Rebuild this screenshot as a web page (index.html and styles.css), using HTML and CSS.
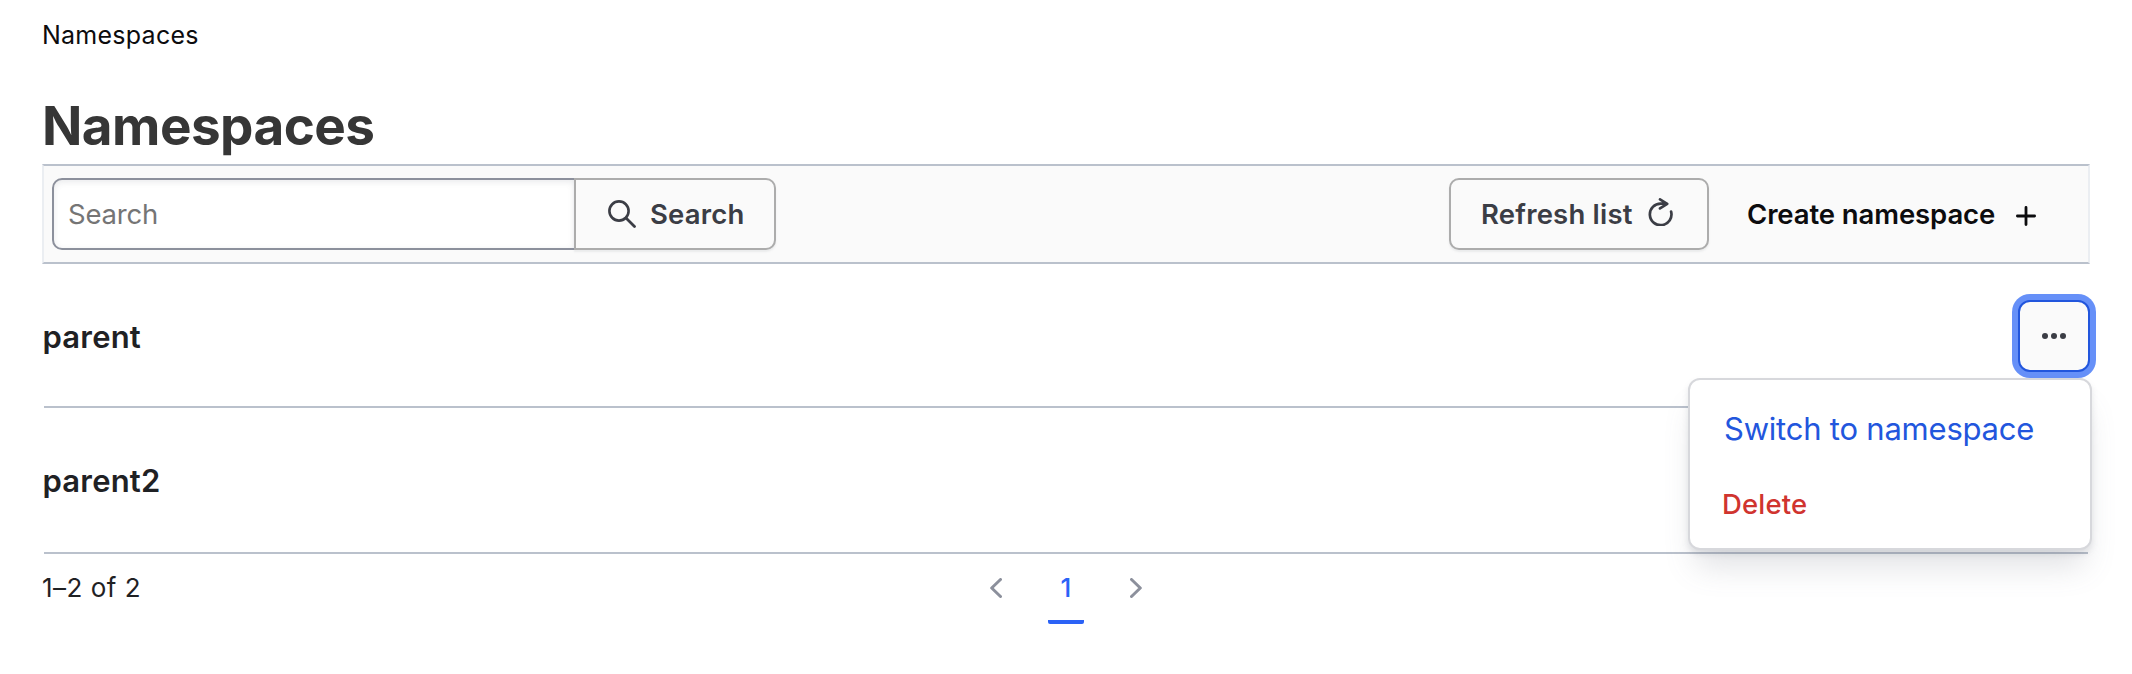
FILE: index.html
```html
<!DOCTYPE html>
<html lang="en">
<head>
<meta charset="utf-8">
<title>Namespaces</title>
<link rel="stylesheet" href="styles.css">
</head>
<body>
<nav class="breadcrumb"><span>Namespaces</span></nav>
<h1 class="title"><span>Namespaces</span></h1>
<div class="toolbar">
  <form class="search">
    <input class="search-input" type="text" placeholder="Search">
    <button class="btn search-btn" type="button">
      <svg width="28" height="28" viewBox="0 0 28 28" fill="none" stroke="currentColor"><circle cx="11" cy="11" r="9.6" stroke-width="2.6"/><path d="M18 18l8.5 8.5" stroke-width="2.8" stroke-linecap="round"/></svg>
      <span>Search</span>
    </button>
  </form>
  <div class="actions">
    <button class="btn refresh-btn" type="button">
      <span>Refresh list</span>
      <svg width="26" height="28" viewBox="0 0 26 28" fill="none" stroke="currentColor" stroke-width="2.7" stroke-linecap="round" stroke-linejoin="round"><path d="M23.1 13.6A10.8 10.8 0 1 1 13 5.6H18.8M12 1.4l7.2 4.4L12 10.4"/></svg>
    </button>
    <a class="create"><span>Create namespace</span>
      <svg width="20" height="20" viewBox="0 0 20 20" fill="none" stroke="currentColor" stroke-width="2.8" stroke-linecap="round"><path d="M10 1.4v17.2M1.4 10h17.2"/></svg>
    </a>
  </div>
</div>
<ul class="list">
  <li class="row">
    <span class="name">parent</span>
    <div class="menu-wrap">
      <button class="more" type="button" aria-label="More"><svg width="24" height="6" viewBox="0 0 24 6" fill="currentColor"><circle cx="3" cy="3" r="3"/><circle cx="12" cy="3" r="3"/><circle cx="21" cy="3" r="3"/></svg></button>
      <div class="menu">
        <a class="switch"><span>Switch to namespace</span></a>
        <a class="delete"><span>Delete</span></a>
      </div>
    </div>
  </li>
  <li class="row second"><span class="name">parent2</span></li>
</ul>
<footer class="pager">
  <span class="count">1–2 of 2</span>
  <div class="pages">
    <svg width="12" height="20" viewBox="0 0 12 20" fill="none" stroke="currentColor" stroke-width="3" stroke-linecap="round" stroke-linejoin="round"><path d="M10.5 1.5L1.7 10l8.8 8.5"/></svg>
    <span class="page">1</span>
    <svg width="12" height="20" viewBox="0 0 12 20" fill="none" stroke="currentColor" stroke-width="3" stroke-linecap="round" stroke-linejoin="round"><path d="M1.5 1.5l8.8 8.5-8.8 8.5"/></svg>
  </div>
</footer>
</body>
</html>
```
FILE: styles.css
```css
* { box-sizing: border-box; }
body { margin: 0; padding: 0 42px; background: #fff; font-family: Inter, "Liberation Sans", sans-serif; color: #1f2124; }
button, input { font: inherit; margin: 0; }
svg { display: block; flex: none; }
.breadcrumb { height: 70px; padding-top: 19px; font-size: 25px; line-height: 32px; letter-spacing: .25px; color: #0c0c0e; }
.title { margin: 0; height: 94px; padding-top: 24px; font-size: 53px; line-height: 64px; font-weight: 700; letter-spacing: -.55px; color: #363636; }
.toolbar { height: 100px; display: flex; justify-content: space-between; align-items: center; padding: 0 0 0 8px; border: 2px solid #bac1cc; border-left-color: #ebeef2; border-right-color: #ebeef2; background: #fafafa; }
.search { display: flex; }
.search-input { width: 524px; height: 72px; padding: 0 14px; border: 2px solid #8c909c; border-radius: 10px 0 0 10px; background: #fff; box-shadow: inset 0 2px 6px rgba(101,106,118,.14); font-size: 27.5px; letter-spacing: -.2px; outline: 0; }
.search-input::placeholder { color: #757575; opacity: 1; }
.btn { height: 72px; display: flex; align-items: center; border: 2px solid #acacac; background: #fafafa; color: #3b3d45; font-size: 27.5px; font-weight: 600; letter-spacing: .2px; box-shadow: 0 2px 2px rgba(101,106,118,.1); white-space: nowrap; }
.search-btn { width: 202px; margin-left: -2px; padding: 0 0 0 32px; gap: 14px; border-radius: 0 10px 10px 0; }
.actions { display: flex; align-items: center; }
.refresh-btn { width: 260px; padding: 0 0 0 30px; gap: 15px; border-radius: 10px; }
.refresh-btn svg { margin-top: -4px; }
.create { width: 379px; display: flex; align-items: center; padding-left: 38px; gap: 21px; font-size: 27.5px; font-weight: 600; letter-spacing: -.1px; color: #0c0c0e; white-space: nowrap; }
.create svg { margin-top: 4px; }
.list { margin: 0; padding: 0; list-style: none; }
.row { height: 144px; margin: 0 2px; display: flex; justify-content: space-between; align-items: center; border-bottom: 2px solid #bac1cc; font-size: 31px; font-weight: 600; }
.row:first-child { padding-top: 2px; }
.second { height: 146px; }
.name { margin-left: -1.5px; letter-spacing: .2px; }
.menu-wrap { position: relative; margin-right: -2px; }
.more { width: 72px; height: 72px; display: grid; place-items: center; padding: 0; border: 2px solid #2256dd; border-radius: 12px; background: #fafafa; color: #3b3d45; box-shadow: 0 0 0 6px #6690f8; }
.menu { position: absolute; top: 78px; right: -2px; width: 404px; height: 172px; padding: 24px 32px; border: 2px solid #d7d8dc; border-radius: 12px; background: #fff; box-shadow: 0 4px 6px rgba(101,106,118,.15), 0 24px 32px -8px rgba(101,106,118,.2); white-space: nowrap; font-weight: 400; }
.switch, .delete { display: block; }
.switch { padding-left: 2px; color: #2256dd; font-size: 31px; line-height: 50px; letter-spacing: -.22px; }
.delete { margin-top: 30px; color: #d0342f; font-size: 27.5px; line-height: 40px; font-weight: 500; letter-spacing: .15px; }
.pager { height: 70px; display: grid; grid-template-columns: 1fr auto 1fr; align-items: start; }
.count { padding-top: 18px; font-size: 26px; line-height: 32px; letter-spacing: .5px; }
.pages { display: flex; justify-content: center; gap: 46px; color: #8c909c; }
.pages svg { margin-top: 24px; }
.page { width: 36px; height: 70px; padding-top: 18px; border-bottom: 4px solid #2b62f6; border-radius: 2px; text-align: center; color: #2b62f6; font-size: 26px; line-height: 32px; font-weight: 500; }
```
